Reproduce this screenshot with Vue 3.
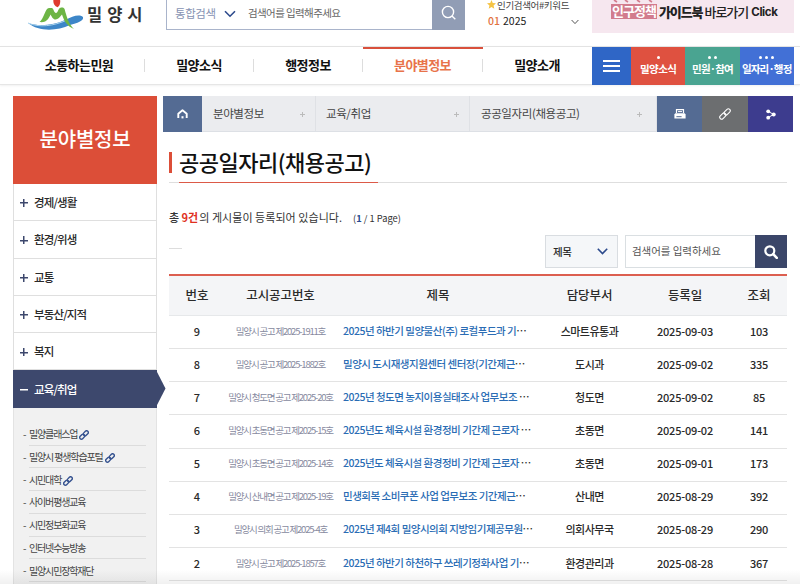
<template>
<div class="page">
  <header class="top">
    <div class="logo">
      <svg width="58" height="32" viewBox="0 0 58 32">
        <path d="M1 23 C12 27 27 25 38 20 C46 16 52 14 56 17 C57 21 50 23 43 25 C30 31 12 32 1 23Z" fill="#3d86c8" />
        <path d="M1 23 C12 28 27 26 40 20" fill="none" stroke="#a8d3ee" stroke-width="1" />
        <path d="M12.5 22 C17 19 18 8 22 8 H25 C27 9 27 13 29 13 C31 13 31 8 34 7.5 C38 7 37.5 9 39 14 C40.5 19 42 24 47 29 C40 26 37 21 35 14.5 C33 17 31 19.5 28.5 19.5 C26 19.5 25 17 23.5 14.5 C22 18 20 23 12.5 22Z" fill="#6db545" />
        <path d="M26.5 -1 h6.5 q1 6 -2.5 8.2 q-5 -2.2 -4 -8.2z" fill="#df3a2f" />
      </svg>
      <span class="logoText">밀양시</span>
    </div>
    <div class="totalSearch">
      <span class="totalLabel">통합검색</span>
      <svg class="totalArrow" width="12" height="8" viewBox="0 0 12 8"><path d="M1 1.2 L6 6.2 L11 1.2" fill="none" stroke="#2c4a8c" stroke-width="1.6" /></svg>
      <span class="totalHint">검색어를 입력해주세요</span>
      <button class="totalButton">
        <svg width="16" height="16" viewBox="0 0 16 16" fill="none" stroke="#fff" stroke-width="1.4"><circle cx="7" cy="7" r="5.6" /><path d="M11 11 L14.3 14.3" /></svg>
      </button>
    </div>
    <div class="keywords">
      <p class="keyTitle"><svg width="9" height="9" viewBox="0 0 10 10"><path d="M5 0 L6.4 3.4 L10 3.7 L7.3 6.1 L8.1 9.7 L5 7.8 L1.9 9.7 L2.7 6.1 L0 3.7 L3.6 3.4Z" fill="#f5c344" /></svg><span>인기검색어#키워드</span></p>
      <p class="keyItem"><b>01</b><span>2025</span>
        <svg width="8" height="6" viewBox="0 0 8 6"><path d="M.6 1 L4 4.6 L7.4 1" fill="none" stroke="#555" /></svg>
      </p>
    </div>
    <div class="banner">
      <svg class="bannerMarks" width="46" height="3" viewBox="0 0 46 3"><path d="M3 0 l3 2 M14 0 l3 2 M26 0 l3 2 M38 0 l3 2" stroke="#d27c8d" stroke-width="1.6" /></svg>
      <div class="bannerText"><span class="bannerTag">인구정책</span><span class="bannerBold">가이드북</span><span class="bannerThin">바로가기</span><span class="bannerClick">Click</span></div>
    </div>
  </header>

  <nav class="nav">
    <a v-for="item in navItems" :key="item.name" class="navItem" :class="[item.size, { navOn: item.on }]">{{ item.name }}</a>
    <div class="quick">
      <button class="quickMenu"><i></i><i></i><i></i></button>
      <a v-for="(q, i) in quickItems" :key="q.name" class="quickItem" :class="q.color">
        <span class="dots"><i v-for="n in i + 1" :key="n"></i></span>
        <span>{{ q.name }}</span>
      </a>
    </div>
  </nav>

  <div class="body">
    <aside class="side">
      <h2 class="sideTitle">분야별정보</h2>
      <ul class="sideMenu">
        <li v-for="m in sideItems" :key="m"><i class="plus"></i>{{ m }}</li>
        <li class="sideOn"><i class="minus"></i>교육/취업
          <svg class="sideArrow" width="10" height="37" viewBox="0 0 10 37"><path d="M0 0 L9.5 18.5 L0 37Z" fill="#3d486d" /></svg>
        </li>
      </ul>
      <ul class="subMenu">
        <li v-for="s in subItems" :key="s.name">
          <span class="dash">-</span>
          <span class="subName">{{ s.name }}
            <svg v-if="s.link" width="10" height="10" viewBox="0 0 10 10" fill="none" stroke="#34518f" stroke-width="1.4" stroke-linecap="round">
              <rect x="4" y="1.6" width="5.6" height="3.4" rx="1.7" transform="rotate(-45 6.8 3.3)" />
              <rect x=".4" y="5" width="5.6" height="3.4" rx="1.7" transform="rotate(-45 3.2 6.7)" />
            </svg>
          </span>
        </li>
      </ul>
    </aside>

    <main class="content">
      <div class="crumbs">
        <a class="home">
          <svg width="11" height="10" viewBox="0 0 11 10"><path d="M1.3 9 V4.7 L5.5 1.3 L9.7 4.7 V9" fill="none" stroke="#fff" stroke-width="1.9" stroke-linejoin="round" /><path d="M4.5 9.4 V7.2 h2 V9.4z" fill="#fff" /></svg>
        </a>
        <a v-for="(c, i) in crumbs" :key="c" class="crumb" :class="'crumb' + i">{{ c }}<i class="crumbPlus"></i></a>
        <a class="tool print">
          <svg width="12" height="10" viewBox="0 0 12 10"><path d="M2.5 4 V.7 H9.5 V4" fill="none" stroke="#fff" stroke-width="1.2" /><path d="M4 2.6 H8" stroke="#fff" /><path d="M1.3 4.2 H10.7 L11.6 5.6 V9.5 H.4 V5.6Z" fill="#fff" /><path d="M2.4 7.7 H7.6" stroke="#546b93" /></svg>
        </a>
        <a class="tool link">
          <svg width="12" height="12" viewBox="0 0 12 12" fill="none" stroke="#fff" stroke-width="1.1">
            <rect x="4.7" y="2" width="7" height="3.8" rx="1.9" transform="rotate(-45 8.2 3.9)" />
            <rect x=".3" y="6.2" width="7" height="3.8" rx="1.9" transform="rotate(-45 3.8 8.1)" />
          </svg>
        </a>
        <a class="tool share">
          <svg width="10" height="11" viewBox="0 0 10 11"><path d="M2.2 2.4 L7.6 5.4 L2.2 8.6" fill="none" stroke="#fff" /><circle cx="2.2" cy="2.3" r="1.9" fill="#fff" /><circle cx="7.7" cy="5.4" r="2" fill="#fff" /><circle cx="2.2" cy="8.7" r="1.9" fill="#fff" /></svg>
        </a>
      </div>

      <div class="titleBox">
        <h1>공공일자리(채용공고)</h1>
      </div>

      <p class="total"><span class="totalHead">총 </span><b>9건</b><span class="totalBody">의 게시물이 등록되어 있습니다.</span><span class="pageInfo">(<b>1</b> / 1 Page)</span></p>

      <div class="searchRow">
        <span class="shortLine"></span>
        <div class="select">제목
          <svg width="11" height="7" viewBox="0 0 11 7"><path d="M.8 .8 L5.5 5.6 L10.2 .8" fill="none" stroke="#2c4a8c" stroke-width="1.6" /></svg>
        </div>
        <div class="field">검색어를 입력하세요</div>
        <button class="fieldButton">
          <svg width="14" height="14" viewBox="0 0 14 14" fill="none" stroke="#fff" stroke-width="2.2"><circle cx="5.8" cy="5.8" r="4.5" /><path d="M9.2 9.2 L12.8 12.8" stroke-width="2.6" stroke-linecap="round" /></svg>
        </button>
      </div>

      <table class="board">
        <colgroup><col class="c1"><col class="c2"><col class="c3"><col class="c4"><col class="c5"><col class="c6"></colgroup>
        <thead>
          <tr><th>번호</th><th>고시공고번호</th><th>제목</th><th>담당부서</th><th>등록일</th><th>조회</th></tr>
        </thead>
        <tbody>
          <tr v-for="r in rows" :key="r.no">
            <td class="no">{{ r.no }}</td>
            <td class="code">{{ r.code }}</td>
            <td class="subject"><a>{{ r.title }}</a>…</td>
            <td class="dept">{{ r.dept }}</td>
            <td class="date">{{ r.date }}</td>
            <td class="hit">{{ r.hit }}</td>
          </tr>
        </tbody>
      </table>
    </main>
  </div>
  <div class="fade"></div>
</div>
</template>

<script setup>
import { ref } from 'vue'

const navItems = ref([
  { name: '소통하는민원', size: 'navWide' },
  { name: '밀양소식', size: 'navSmall' },
  { name: '행정정보', size: 'navSmall' },
  { name: '분야별정보', size: 'navMid', on: true },
  { name: '밀양소개', size: 'navSmall' }
])

const quickItems = ref([
  { name: '밀양소식', color: 'red' },
  { name: '민원·참여', color: 'green' },
  { name: '일자리·행정', color: 'blue' }
])

const sideItems = ref(['경제/생활', '환경/위생', '교통', '부동산/지적', '복지'])

const subItems = ref([
  { name: '밀양클래스업', link: true },
  { name: '밀양시 평생학습포털', link: true },
  { name: '시민대학', link: true },
  { name: '사이버평생교육' },
  { name: '시민정보화교육' },
  { name: '인터넷수능방송' },
  { name: '밀양시민장학재단' }
])

const crumbs = ref(['분야별정보', '교육/취업', '공공일자리(채용공고)'])

const rows = ref([
  { no: 9, code: '밀양시 공고 제2025-1911호', title: '2025년 하반기 밀양물산(주) 로컬푸드과 기', dept: '스마트유통과', date: '2025-09-03', hit: 103 },
  { no: 8, code: '밀양시 공고 제2025-1882호', title: '밀양시 도시재생지원센터 센터장(기간제근', dept: '도시과', date: '2025-09-02', hit: 335 },
  { no: 7, code: '밀양시 청도면 공고 제2025-20호', title: '2025년 청도면 농지이용실태조사 업무보조 ', dept: '청도면', date: '2025-09-02', hit: 85 },
  { no: 6, code: '밀양시 초동면 공고 제2025-15호', title: '2025년도 체육시설 환경정비 기간제 근로자 ', dept: '초동면', date: '2025-09-02', hit: 141 },
  { no: 5, code: '밀양시 초동면 공고 제2025-14호', title: '2025년도 체육시설 환경정비 기간제 근로자 ', dept: '초동면', date: '2025-09-01', hit: 173 },
  { no: 4, code: '밀양시 산내면 공고 제2025-19호', title: '민생회복 소비쿠폰 사업 업무보조 기간제근', dept: '산내면', date: '2025-08-29', hit: 392 },
  { no: 3, code: '밀양시 의회 공고 제2025-4호', title: '2025년 제4회 밀양시의회 지방임기제공무원', dept: '의회사무국', date: '2025-08-29', hit: 290 },
  { no: 2, code: '밀양시 공고 제2025-1857호', title: '2025년 하반기 하천하구 쓰레기정화사업 기', dept: '환경관리과', date: '2025-08-28', hit: 367 }
])
</script>

<style>
body {
  margin: 0;
  overflow: hidden;
}
</style>

<style scoped>
* {
  box-sizing: border-box;
}

.page {
  position: relative;
  width: 800px;
  height: 584px;
  overflow: hidden;
  background-color: #fff;
  color: #2a2a2a;
  font-family: "Noto Sans CJK KR", "Noto Sans", sans-serif;
  font-size: 11px;
  font-weight: 500;
}

p, h1, h2, ul {
  margin: 0;
  padding: 0;
  list-style: none;
}

button {
  border: none;
  padding: 0;
}

svg {
  display: block;
}

/* header */
.top {
  display: flex;
  height: 46px;
}

.logo {
  display: flex;
  width: 166px;
  padding-left: 27px;
}

.logoText {
  margin-left: 2px;
  font-size: 16.5px;
  line-height: 29px;
  font-weight: 700;
  letter-spacing: 5px;
  color: #333;
  white-space: nowrap;
}

.totalSearch {
  display: flex;
  width: 299px;
  height: 30px;
  border: 1px solid #a9b4cb;
  border-top: none;
  line-height: 26px;
}

.totalLabel {
  width: 57px;
  padding-left: 8px;
  color: #8793b3;
  font-size: 11.5px;
  font-weight: 400;
  letter-spacing: -0.4px;
}

.totalArrow {
  margin-top: 10px;
}

.totalHint {
  flex: 1;
  padding-left: 12px;
  color: #666;
  font-size: 10.5px;
  font-weight: 400;
  letter-spacing: -0.6px;
}

.totalButton {
  display: flex;
  width: 33px;
  height: 30px;
  margin-right: -1px;
  padding: 5px 0 0 9px;
  background-color: #919db5;
}

.keywords {
  width: 127px;
  padding-left: 22px;
}

.keyTitle {
  display: flex;
  height: 11px;
  line-height: 10px;
  font-size: 9.5px;
  font-weight: 400;
  letter-spacing: -0.35px;
  color: #444;
}

.keyTitle span {
  margin-left: 1px;
}

.keyItem {
  display: flex;
  align-items: center;
  height: 19px;
  padding-left: 1px;
  font-size: 10.5px;
  font-weight: 400;
  color: #222;
}

.keyItem b {
  width: 15px;
  font-weight: 500;
  color: #e2733f;
}

.keyItem svg {
  margin: 3px 0 0 45px;
}

.banner {
  width: 202px;
  height: 33px;
  background-color: #f6e7ef;
}

.bannerMarks {
  margin-left: 19px;
}

.bannerText {
  display: flex;
  align-items: center;
  height: 17px;
  padding-left: 19px;
  font-size: 13px;
  color: #222;
  white-space: nowrap;
}

.bannerTag {
  width: 46px;
  height: 15px;
  background-color: #d27c8d;
  color: #fff;
  line-height: 13px;
  text-align: center;
  font-weight: 700;
  letter-spacing: -1px;
}

.bannerBold {
  margin-left: 2px;
  font-weight: 900;
  letter-spacing: -1.1px;
}

.bannerThin {
  margin-left: 2px;
  font-weight: 500;
  letter-spacing: -1px;
}

.bannerClick {
  margin: 1px 0 0 3px;
  font-family: Inter, sans-serif;
  font-size: 11.5px;
  font-weight: 700;
  letter-spacing: -0.4px;
}

/* navigation */
.nav {
  display: flex;
  height: 39px;
  padding-left: 14px;
  border-top: 1px solid #e3e3e3;
  border-bottom: 1px solid #e6e6e6;
  box-shadow: 0 1px 2px #f1f1f1;
}

.navItem {
  display: flex;
  align-items: center;
  justify-content: center;
  position: relative;
  height: 37px;
  padding: 0 1px 2px 0;
  font-size: 13px;
  font-weight: 700;
  letter-spacing: -0.55px;
  color: #111;
}

.navItem:nth-child(-n+4)::after {
  content: "";
  position: absolute;
  right: 0;
  top: 12px;
  width: 1px;
  height: 13px;
  background-color: #ddd;
}

.navWide {
  width: 131px;
}

.navSmall {
  width: 109px;
}

.navMid {
  width: 120px;
}

.navOn {
  color: #e8734a;
}

.navOn::before {
  content: "";
  position: absolute;
  left: 0;
  top: 0;
  width: 120px;
  height: 2px;
  background-color: #d9503c;
}

.quick {
  display: flex;
}

.quickMenu {
  display: flex;
  flex-direction: column;
  align-items: center;
  justify-content: center;
  gap: 3px;
  width: 39px;
  height: 38px;
  background-color: #2f66c6;
}

.quickMenu i {
  width: 17px;
  height: 2px;
  background-color: #fff;
}

.quickItem {
  width: 54.3px;
  height: 38px;
  padding-top: 9px;
  color: #fff;
  font-size: 10.5px;
  line-height: 19px;
  font-weight: 700;
  letter-spacing: -0.6px;
  text-align: center;
  white-space: nowrap;
}

.green, .blue {
  letter-spacing: -0.8px;
}

.dots {
  display: flex;
  justify-content: center;
  gap: 3px;
  height: 3px;
}

.dots i {
  width: 3px;
  height: 3px;
  border-radius: 50%;
  background-color: #fff;
}

.red {
  background-color: #df5140;
}

.green {
  background-color: #4aa491;
}

.blue {
  background-color: #4270d6;
}

.body {
  display: flex;
  padding: 11px 0 0 13px;
}

/* left menu */
.side {
  width: 144px;
  height: 488px;
  margin-right: 6px;
}

.sideTitle {
  height: 88px;
  background-color: #dc4e38;
  color: #fff;
  font-size: 20px;
  line-height: 86px;
  font-weight: 500;
  letter-spacing: -0.2px;
  text-align: center;
}

.sideMenu li {
  display: flex;
  align-items: center;
  position: relative;
  height: 37.3px;
  padding: 0 0 0 6px;
  border: 1px solid #dfdfdf;
  border-top: none;
  font-size: 11.5px;
  letter-spacing: -0.85px;
}

.plus, .minus {
  width: 8px;
  height: 8px;
  margin: 2px 6px 0 0;
  background: linear-gradient(#3d486d, #3d486d) 0 center / 8px 1.5px no-repeat, linear-gradient(#3d486d, #3d486d) center 0 / 1.5px 8px no-repeat;
}

.sideMenu .sideOn {
  border-color: #3d486d;
  background-color: #3d486d;
  color: #fff;
}

.minus {
  background: linear-gradient(#fff, #fff) 0 center / 8px 1.5px no-repeat;
}

.sideArrow {
  position: absolute;
  left: 142px;
  top: 0;
}

.subMenu {
  height: 177px;
  padding: 15px 10px 0 9px;
  border: 1px solid #e3e3e3;
  border-top: none;
  background-color: #f1f1f1;
}

.subMenu li {
  display: flex;
  height: 22.75px;
  color: #444;
  font-size: 10px;
  line-height: 25px;
  font-weight: 400;
  letter-spacing: -1.15px;
}

.dash {
  width: 6px;
  line-height: 22px;
}

.subName {
  display: flex;
  align-items: center;
  gap: 2px;
  flex: 1;
  border-bottom: 1px solid #dcdcdc;
  white-space: nowrap;
}

.subName svg {
  margin-top: 3px;
}

/* content */
.content {
  width: 630px;
}

.crumbs {
  display: flex;
  height: 36px;
  border-bottom: 1px solid #dde0e5;
  background-color: #ebecef;
}

.home, .tool {
  display: flex;
  align-items: center;
  justify-content: center;
  width: 39px;
  height: 36px;
  background-color: #546b93;
}

.crumb {
  display: flex;
  align-items: center;
  justify-content: space-between;
  height: 35px;
  padding: 0 10px 1px 11px;
  border-right: 1px solid #dfe1e5;
  color: #444;
  font-size: 11.5px;
  font-weight: 400;
  letter-spacing: -0.4px;
}

.crumb0 {
  width: 114px;
}

.crumb1 {
  width: 154px;
  padding-left: 10px;
}

.crumb2 {
  width: 187px;
  padding-right: 14px;
}

.crumbPlus {
  width: 5px;
  height: 5px;
  margin-top: 2px;
  background: linear-gradient(#bbb, #bbb) 0 2px / 5px 1px no-repeat, linear-gradient(#bbb, #bbb) 2px 0 / 1px 5px no-repeat;
}

.tool {
  width: 45px;
}

.link {
  width: 46px;
  background-color: #6c6e70;
}

.share {
  background-color: #3d3c8e;
}

.titleBox {
  display: flex;
  align-items: flex-start;
  width: 618px;
  height: 51px;
  margin-left: 6px;
  padding-top: 20px;
  border-bottom: 1px solid #dedede;
}

.titleBox::before {
  content: "";
  width: 3px;
  height: 21px;
  background-color: #dc4e38;
}

.titleBox h1 {
  width: 199px;
  height: 31px;
  margin-left: 7px;
  border-bottom: 1px solid #dc5a48;
  font-size: 22px;
  line-height: 18px;
  font-weight: 500;
  letter-spacing: -0.5px;
  color: #111;
  white-space: nowrap;
}

.total {
  display: flex;
  align-items: center;
  height: 52px;
  padding: 16px 0 0 6px;
  font-size: 11px;
  font-weight: 400;
  color: #333;
  white-space: pre;
}

.totalHead {
  font-weight: 500;
}

.total > b {
  color: #e0301e;
  font-weight: 700;
}

.totalBody {
  margin-left: 1px;
  letter-spacing: 0.05px;
}

.pageInfo {
  margin: 2px 0 0 11px;
  font-size: 9.3px;
}

.pageInfo b {
  color: #23498f;
}

.searchRow {
  display: flex;
  width: 618px;
  height: 33px;
  margin-left: 6px;
}

.shortLine {
  width: 13px;
  height: 14px;
  margin-right: 363px;
  border-bottom: 1px solid #ddd;
}

.select {
  display: flex;
  align-items: center;
  justify-content: space-between;
  width: 73px;
  height: 33px;
  margin-right: 7px;
  padding: 0 9px 0 7px;
  border: 1px solid #d9dde1;
  background-color: #f5f7f9;
  font-size: 10.5px;
  letter-spacing: -0.3px;
}

.field {
  width: 130px;
  padding-left: 6px;
  border: 1px solid #dadfe2;
  border-right: none;
  color: #555;
  font-size: 10.5px;
  line-height: 30px;
  font-weight: 400;
  letter-spacing: -0.05px;
}

.fieldButton {
  display: flex;
  align-items: center;
  justify-content: center;
  width: 32px;
  background-color: #3b4669;
}

.board {
  width: 618px;
  margin: 6px 0 0 6px;
  border-collapse: separate;
  border-spacing: 0;
  border-top: 2px solid #dc5f50;
  table-layout: fixed;
}

.c1, .c6 {
  width: 56px;
}

.c2 {
  width: 111px;
}

.c3 {
  width: 204px;
}

.c4 {
  width: 99px;
}

.c5 {
  width: 92px;
}

.board th {
  height: 40px;
  padding: 0 0 3px;
  border-bottom: 1px solid #e6e8ea;
  background-color: #f4f5f7;
  font-size: 12.5px;
  font-weight: 500;
  letter-spacing: -0.1px;
}

.board td {
  height: 33.15px;
  padding: 0 0 3px;
  border-bottom: 1px solid #e3e3e3;
  line-height: 16px;
  text-align: center;
  white-space: nowrap;
}

.board .code {
  color: #878aa0;
  font-size: 9.5px;
  font-weight: 400;
  letter-spacing: -1.2px;
}

.board .subject {
  padding-left: 7px;
  font-size: 10.5px;
  text-align: left;
  letter-spacing: -0.5px;
  white-space: pre;
}

.subject a {
  color: #2a6cb4;
}

.dept {
  letter-spacing: -0.5px;
}

.date, .hit {
  letter-spacing: -0.2px;
}

.fade {
  position: absolute;
  left: 0;
  bottom: 0;
  width: 800px;
  height: 14px;
  background: linear-gradient(rgba(0, 0, 0, 0), rgba(0, 0, 0, 0.06));
}
</style>
